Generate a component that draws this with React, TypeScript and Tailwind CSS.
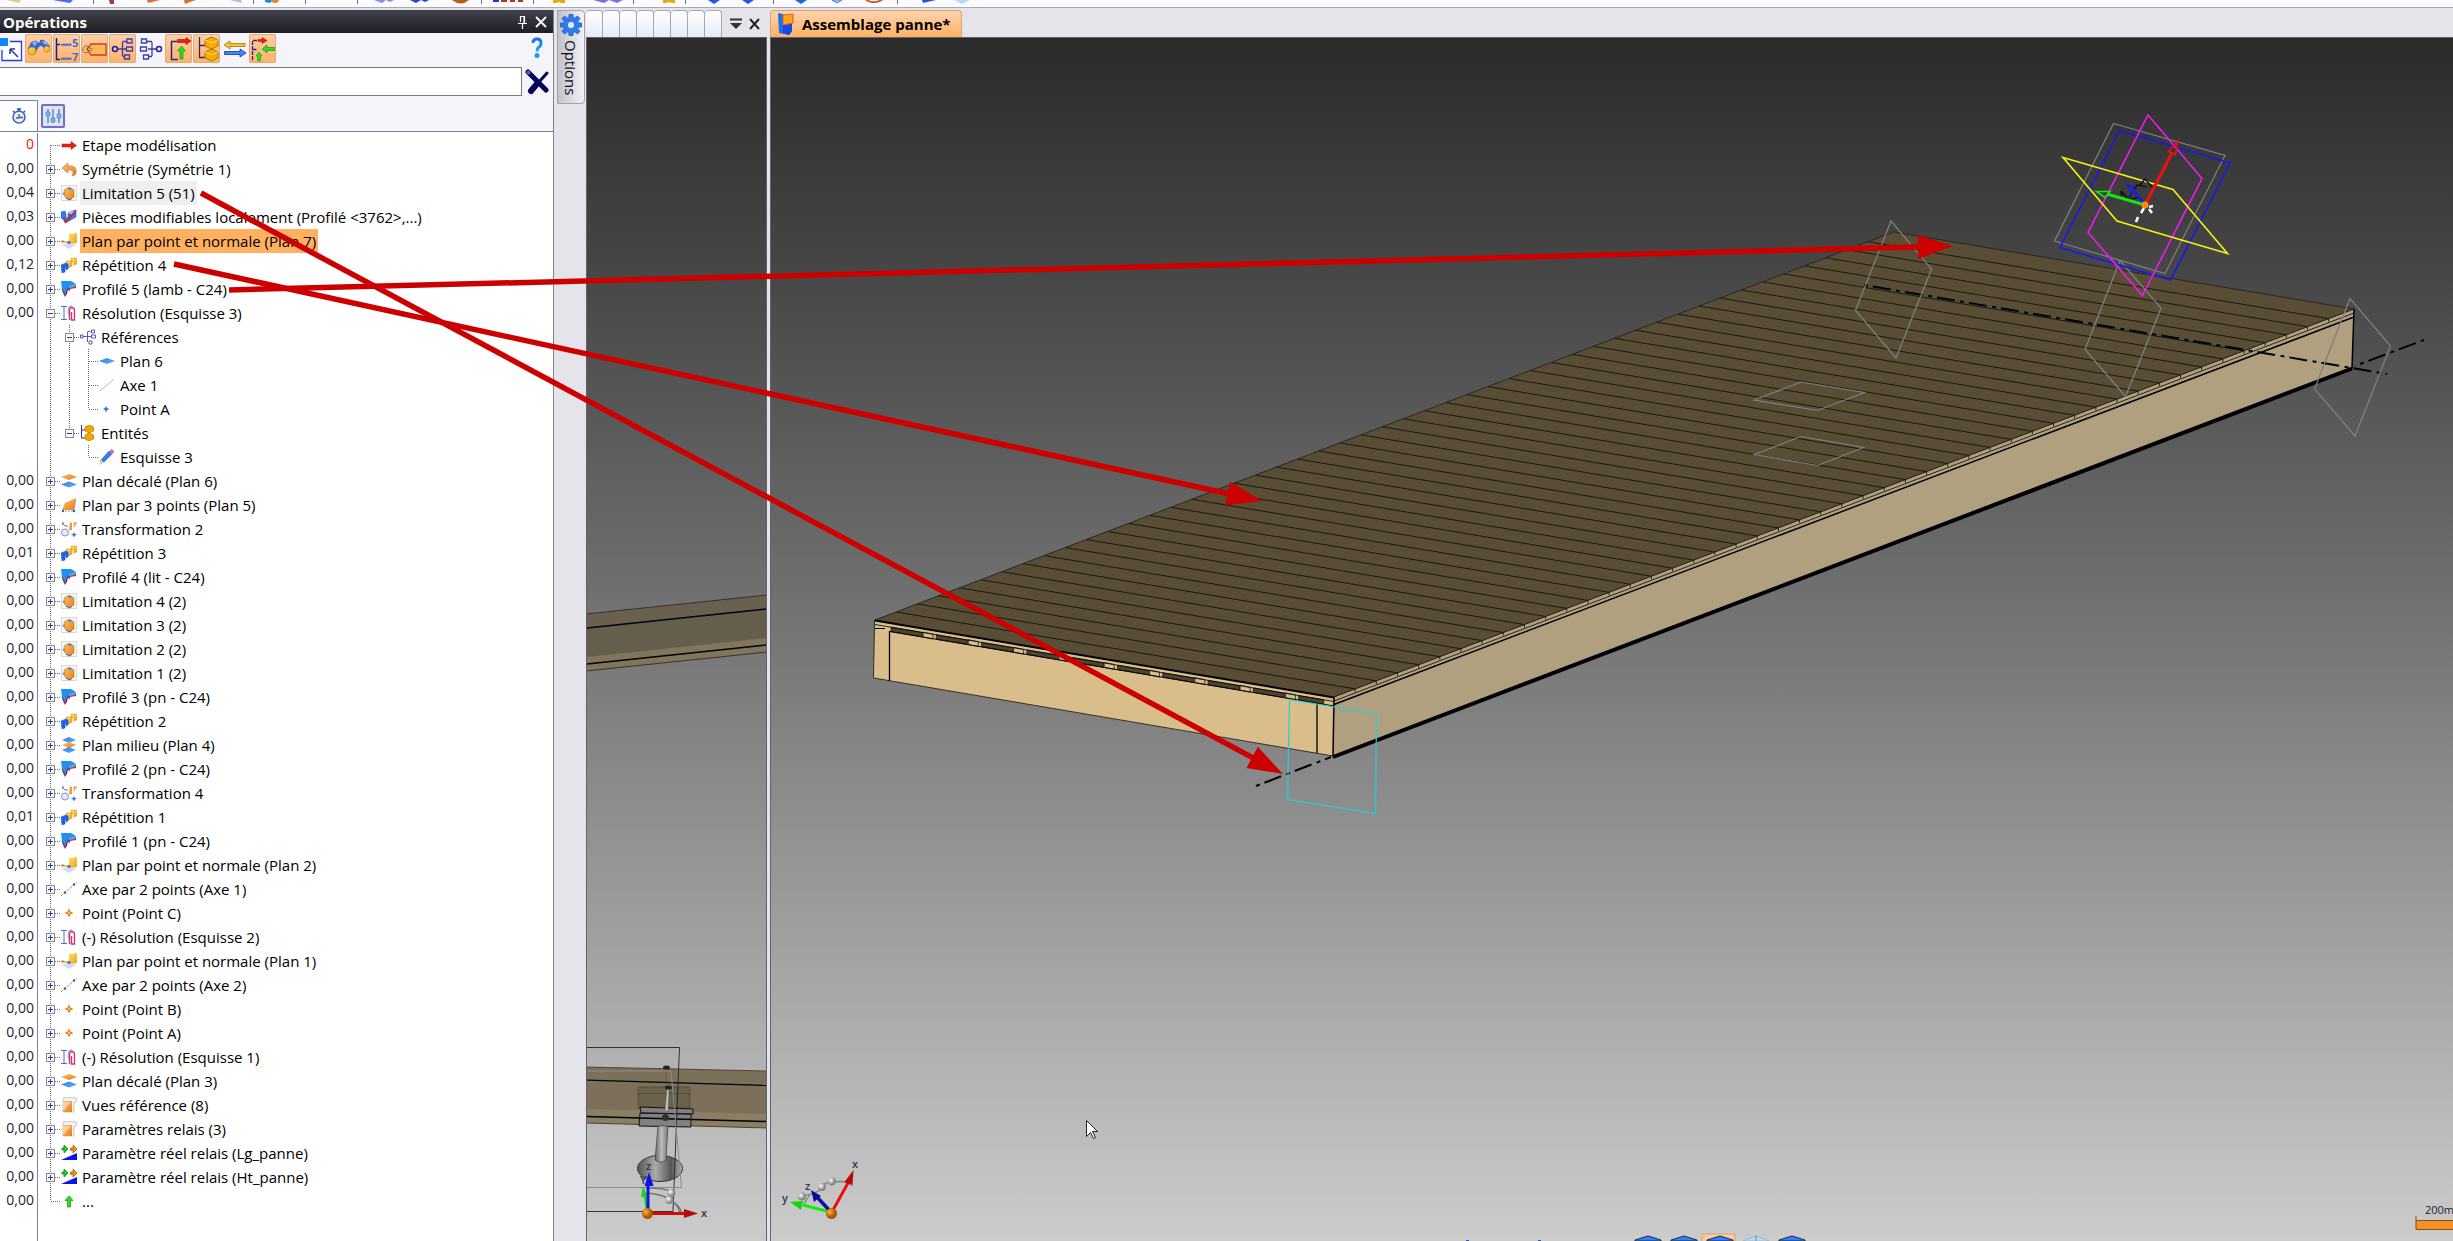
import React from "react";

type IconName =
  | "step" | "symmetry" | "limit" | "pieces" | "normal" | "repeat" | "profile" | "resolve"
  | "refs" | "plane" | "axis" | "dot" | "entities" | "pencil" | "offset" | "three"
  | "transform" | "middle" | "axis2" | "point" | "folder" | "param" | "up";

type Row = {
  t?: string;
  icon: IconName;
  label: string;
  level?: 0 | 1 | 2;
  box?: "+" | "-";
  guides?: boolean[];
  edge?: "first" | "last";
  tone?: "gray" | "orange";
};

const rows: Row[] = [
  { t: "0", icon: "step", label: "Etape modélisation", edge: "first" },
  { t: "0,00", icon: "symmetry", label: "Symétrie (Symétrie 1)", box: "+" },
  { t: "0,04", icon: "limit", label: "Limitation 5 (51)", box: "+", tone: "gray" },
  { t: "0,03", icon: "pieces", label: "Pièces modifiables localement (Profilé <3762>,...)", box: "+" },
  { t: "0,00", icon: "normal", label: "Plan par point et normale (Plan 7)", box: "+", tone: "orange" },
  { t: "0,12", icon: "repeat", label: "Répétition 4", box: "+" },
  { t: "0,00", icon: "profile", label: "Profilé 5 (lamb - C24)", box: "+" },
  { t: "0,00", icon: "resolve", label: "Résolution (Esquisse 3)", box: "-" },
  { icon: "refs", label: "Références", level: 1, box: "-", guides: [true] },
  { icon: "plane", label: "Plan 6", level: 2, guides: [true, true] },
  { icon: "axis", label: "Axe 1", level: 2, guides: [true, true] },
  { icon: "dot", label: "Point A", level: 2, guides: [true, true], edge: "last" },
  { icon: "entities", label: "Entités", level: 1, box: "-", guides: [true], edge: "last" },
  { icon: "pencil", label: "Esquisse 3", level: 2, guides: [true, false], edge: "last" },
  { t: "0,00", icon: "offset", label: "Plan décalé (Plan 6)", box: "+" },
  { t: "0,00", icon: "three", label: "Plan par 3 points (Plan 5)", box: "+" },
  { t: "0,00", icon: "transform", label: "Transformation 2", box: "+" },
  { t: "0,01", icon: "repeat", label: "Répétition 3", box: "+" },
  { t: "0,00", icon: "profile", label: "Profilé 4 (lit - C24)", box: "+" },
  { t: "0,00", icon: "limit", label: "Limitation 4 (2)", box: "+" },
  { t: "0,00", icon: "limit", label: "Limitation 3 (2)", box: "+" },
  { t: "0,00", icon: "limit", label: "Limitation 2 (2)", box: "+" },
  { t: "0,00", icon: "limit", label: "Limitation 1 (2)", box: "+" },
  { t: "0,00", icon: "profile", label: "Profilé 3 (pn - C24)", box: "+" },
  { t: "0,00", icon: "repeat", label: "Répétition 2", box: "+" },
  { t: "0,00", icon: "middle", label: "Plan milieu (Plan 4)", box: "+" },
  { t: "0,00", icon: "profile", label: "Profilé 2 (pn - C24)", box: "+" },
  { t: "0,00", icon: "transform", label: "Transformation 4", box: "+" },
  { t: "0,01", icon: "repeat", label: "Répétition 1", box: "+" },
  { t: "0,00", icon: "profile", label: "Profilé 1 (pn - C24)", box: "+" },
  { t: "0,00", icon: "normal", label: "Plan par point et normale (Plan 2)", box: "+" },
  { t: "0,00", icon: "axis2", label: "Axe par 2 points (Axe 1)", box: "+" },
  { t: "0,00", icon: "point", label: "Point (Point C)", box: "+" },
  { t: "0,00", icon: "resolve", label: "(-) Résolution (Esquisse 2)", box: "+" },
  { t: "0,00", icon: "normal", label: "Plan par point et normale (Plan 1)", box: "+" },
  { t: "0,00", icon: "axis2", label: "Axe par 2 points (Axe 2)", box: "+" },
  { t: "0,00", icon: "point", label: "Point (Point B)", box: "+" },
  { t: "0,00", icon: "point", label: "Point (Point A)", box: "+" },
  { t: "0,00", icon: "resolve", label: "(-) Résolution (Esquisse 1)", box: "+" },
  { t: "0,00", icon: "offset", label: "Plan décalé (Plan 3)", box: "+" },
  { t: "0,00", icon: "folder", label: "Vues référence (8)", box: "+" },
  { t: "0,00", icon: "folder", label: "Paramètres relais (3)", box: "+" },
  { t: "0,00", icon: "param", label: "Paramètre réel relais (Lg_panne)", box: "+" },
  { t: "0,00", icon: "param", label: "Paramètre réel relais (Ht_panne)", box: "+" },
  { t: "0,00", icon: "up", label: "...", edge: "last" },
];

const glyphs: Record<IconName, React.ReactNode> = {
  step: <path d="M1 7h9V4.500l5.500 4-5.500 4V10H1z" fill="#e8200c" stroke="#a81808" strokeWidth=".5" />,
  symmetry: (
    <>
      <path d="M1 7l6-5v3c6-1 9 2 8 8-1 1-3 2-4 2 2-4 1-6-4-6v3z" fill="url(#gOr)" stroke="#b8661c" strokeWidth=".5" />
      <path d="M2 8l5 3v1z" fill="#7d98c8" />
    </>
  ),
  limit: (
    <>
      <rect x=".5" y=".5" width="15" height="15" fill="#f7f7f7" stroke="#d9d9d9" />
      <path d="M1 9l3-3 3 7z" fill="#46b8e8" />
      <path d="M3 5l5-3 5 3v7l-5 3-4-3z" fill="url(#gOr)" stroke="#b86a10" strokeWidth=".5" />
      <path d="M6 4l3-1.500 3 1.500-3 .8z" fill="#3b86d8" />
      <path d="M5 13l3 2 3-1.500" stroke="#4a6a90" fill="none" />
    </>
  ),
  pieces: (
    <>
      <path d="M0 3l4-1 1 3v4l2-1V4l4-2 4-1v7l-7 4-4 2-2-4-2-1z" fill="#2d7ef0" stroke="#1746b8" strokeWidth=".5" />
      <path d="M7 3l5-2 1 3-5 2z" fill="#9cc0ff" />
      <path d="M3 9l2 4 5-6M8 5l2 2 5-5" stroke="#e01818" strokeWidth="1.600" fill="none" />
    </>
  ),
  normal: (
    <>
      <path d="M1 12l7-3 7 3-7 4z" fill="#d3dff0" />
      <path d="M8 1l8-1v10l-8 1z" fill="url(#gYe)" />
      <path d="M1 8.500l8 1" stroke="#e0701c" strokeWidth="1.200" />
      <circle cx="1.500" cy="8.500" r="1.200" fill="#e0701c" />
      <circle cx="8" cy="9.500" r="1.400" fill="#2a64d8" />
    </>
  ),
  repeat: (
    <>
      <path d="M10 1h6v6l-3 1V5l-3-1z" fill="url(#gYe)" stroke="#d09010" strokeWidth=".5" />
      <path d="M5 4h6v5l-4 2V8L5 7z" fill="url(#gYe)" stroke="#c08010" strokeWidth=".5" />
      <path d="M0 8l5-2 2 1v5l-2 1v-3l-1 1v4l-3 1z" fill="#1c62f0" stroke="#1a4cc8" strokeWidth=".5" />
    </>
  ),
  profile: (
    <>
      <path d="M1 1l14 3v3l-6 1v2l-2-1-1 4-2 3-3-6z" fill="#8c3a5c" />
      <path d="M0 0h10l5 3-8 2-3 8-3-5z" fill="#1d92f0" />
      <path d="M7 5l8-2-1 3-6 1z" fill="#5fa3e0" />
    </>
  ),
  resolve: (
    <>
      <path d="M0 1.500h6M0 14.500h6M3 1v14" stroke="#3b78c8" fill="none" />
      <path d="M7.500 10V5q0-4 3.500-4" stroke="#9ab8dc" strokeWidth="1.500" fill="none" />
      <path d="M8.500 15V6Q8.500 2.500 11 2.500T13.500 6v9h-3V7" stroke="#e0286e" strokeWidth="1.300" fill="none" />
    </>
  ),
  refs: (
    <path d="M3 7.500h5M7.500 3v10M7.500 2.500h3M0.500 6h2.500v3H.500zM11.500 1h3v3h-3zM11.500 6h4v3h-4zM8 7.500h3M9 12h3v3H9z" stroke="#5558b8" fill="none" />
  ),
  plane: <path d="M0 8l8-3 8 3-8 3z" fill="url(#gBl)" />,
  axis: <path d="M1 14L15 2" stroke="#a8bcd8" />,
  dot: <path d="M7 5l1 2 2.500 1L8 9l-1 2.500L6 9 4 8l2-1z" fill="#2f74e0" />,
  entities: (
    <>
      <path d="M1.500 0v13H5M1.500 5H5" stroke="#2828a8" fill="none" />
      <path d="M5 2l4-2 4.500 2v4L9 8 5 6zM5 10l4-2 4.500 2v4L9 16l-4-2z" fill="#f5a800" stroke="#b87800" strokeWidth=".7" />
    </>
  ),
  pencil: (
    <>
      <path d="M2 11l8-9 3 3-8 8-4 2z" fill="#2f7df0" stroke="#1b57c0" strokeWidth=".5" />
      <path d="M10 2.500L12.500 0 15.500 2.500 13 5.500z" fill="#d8689c" />
      <path d="M2 11l3 2.500L0 16z" fill="#f0d8a0" />
    </>
  ),
  offset: (
    <>
      <path d="M0 4l8-3 8 3-8 3z" fill="url(#gOr)" />
      <path d="M0 11.500l8-3 8 3-8 3z" fill="url(#gBl)" />
    </>
  ),
  three: (
    <>
      <path d="M1 13L4 6l11-5-2 12z" fill="url(#gOr)" />
      <path d="M1 14h12l2-12" stroke="#7c98d8" strokeDasharray="2 1" fill="none" />
      <circle cx="2" cy="14" r="1.200" fill="#2a5cd0" /><circle cx="13" cy="14" r="1.200" fill="#2a5cd0" />
    </>
  ),
  transform: (
    <>
      <path d="M1 2l3 3h3M2 1v3" stroke="#4878d0" fill="none" />
      <circle cx="4" cy="11.500" r="3.500" fill="#e4eaf8" stroke="#8090d0" />
      <path d="M8 9l1-8 2 1v7z" fill="#f59a30" />
      <path d="M13 6l1-4h-2M15 1v3" stroke="#e8883c" fill="none" />
      <path d="M13 11l1 2 2 .5-2 1-1 2-1-2-2-1 2-.5z" fill="#3f78d8" />
    </>
  ),
  middle: (
    <>
      <path d="M1 3l7-3 7 3-7 3z" fill="url(#gBl)" />
      <path d="M1 8l7-3 7 3-7 3z" fill="url(#gOr)" />
      <path d="M1 13l7-3 7 3-7 3z" fill="url(#gBl)" />
    </>
  ),
  axis2: (
    <>
      <path d="M0 15L16 1" stroke="#e8883c" strokeDasharray="3 1" />
      <circle cx="4" cy="11.500" r="1.200" fill="#2a5cd0" /><circle cx="13" cy="3.500" r="1.200" fill="#2a5cd0" />
    </>
  ),
  point: <path d="M8 4.500l1 2.500L11.500 8 9 9l-1 2.500L7 9 4.500 8 7 7z" fill="#ffc040" stroke="#e07818" />,
  folder: (
    <>
      <path d="M2 1q6-1 13.500 0L15 5h-2v10H2z" fill="#f4f4f4" stroke="#b4b4b4" strokeWidth=".7" />
      <path d="M2 4h9v11H2z" fill="url(#gOr)" />
      <path d="M2 14l8-9H2z" fill="#f8d8b8" opacity=".8" />
    </>
  ),
  param: (
    <>
      <path d="M1 3h2V0l4 4-4 4V5H1z" fill="#1fd01f" stroke="#0a7a0a" strokeWidth=".7" />
      <path d="M9.500 3h2.500V0l4 4-4 4V5.500H9.500z" fill="#f08c14" stroke="#9c5200" strokeWidth=".7" />
      <path d="M0 15L16 8v7z" fill="#0814e8" />
    </>
  ),
  up: <path d="M8 3l4 4.500H9.500V14h-3V7.500H4z" fill="#26e020" stroke="#0e9a0c" strokeWidth=".7" />,
};

function Glyph({ name }: { name: IconName }) {
  return (
    <svg viewBox="0 0 16 16" className="size-4 shrink-0" aria-hidden="true">
      {glyphs[name]}
    </svg>
  );
}

function Branch({ row }: { row: Row }) {
  const y1 = row.edge === "first" ? 12 : 0;
  const y2 = row.edge === "last" ? 12 : 24;
  return (
    <span className="relative flex h-6 w-[23px] shrink-0">
      <svg viewBox="0 0 23 24" className="h-6 w-[23px]" aria-hidden="true">
        <path d={`M12.500 ${y1}V${y2}M13 12.500H23`} stroke="#6e6e6e" strokeDasharray="1 1" fill="none" />
      </svg>
      {row.box && (
        <button type="button" aria-label={`${row.box === "+" ? "Développer" : "Réduire"} ${row.label}`} className="absolute top-2 left-2 flex size-[9px] items-center justify-center border border-[#8a8a8a] bg-[#f6f6f6]">
          <svg viewBox="0 0 7 7" className="size-[7px] shrink-0" aria-hidden="true">
            <path d={row.box === "+" ? "M1 3.500H6M3.500 1V6" : "M1 3.500H6"} stroke="#2c3c98" fill="none" />
          </svg>
        </button>
      )}
    </span>
  );
}

function TreeRow({ row }: { row: Row }) {
  const tone = row.tone === "orange" ? "bg-[#ffb060]" : row.tone === "gray" ? "bg-[#efefef]" : "";
  return (
    <li className="flex h-6 items-center">
      <span className={`h-6 w-[38px] shrink-0 border-r border-[#82828c] pr-[3px] text-right text-sm leading-[22px] ${row.t === "0" ? "text-[#ff1010]" : "text-[#1c1c30]"}`}>
        {row.t}
      </span>
      {row.guides?.map((on, i) => (
        <svg key={i} viewBox="0 0 19 24" className="h-6 w-[19px] shrink-0" aria-hidden="true">
          {on && <path d="M12.500 0V24" stroke="#6e6e6e" strokeDasharray="1 1" />}
        </svg>
      ))}
      <Branch row={row} />
      <Glyph name={row.icon} />
      <span className={`ml-[3px] h-6 px-[2px] text-[15px] leading-6 whitespace-nowrap text-black ${tone}`}>{row.label}</span>
    </li>
  );
}

const tools: { label: string; on: boolean; art: React.ReactNode }[] = [
  {
    label: "Rechercher", on: true,
    art: (
      <>
        <path d="M3 15l4-7 4-1 3 3 2-4 4 1 5 6-3 3-6-5-3 2-3 6z" fill="#2c6ae8" stroke="#1740a8" strokeWidth=".7" />
        <path d="M7 8l4-1 1 3-3 2zM17 7l4 0 2 4-4-1z" fill="#86b4ff" />
        <circle cx="7" cy="17" r="4" fill="url(#gYe)" stroke="#b07808" strokeWidth=".7" />
        <circle cx="22" cy="15" r="3" fill="url(#gYe)" stroke="#b07808" strokeWidth=".7" />
      </>
    ),
  },
  {
    label: "Numéroter", on: true,
    art: (
      <>
        <path d="M3.500 4V25.500H7M3.500 10.500H7" stroke="#20208c" strokeWidth="1.500" fill="none" />
        <path d="M8 10l1.500 1.500L11 10l1.500 1.500L14 10l1.500 1.500L17 10l1.500 1.500M8 24l1.500 1.500L11 24l1.500 1.500L14 24l1.500 1.500L17 24l1.500 1.500" stroke="#3c6ed0" strokeWidth="1.500" fill="none" />
        <text x="19" y="13" fontSize="11" fontWeight="700" fill="#3c6ed0" fontFamily="Open Sans, sans-serif">5</text>
        <text x="19" y="27" fontSize="11" fontWeight="700" fill="#3c6ed0" fontFamily="Open Sans, sans-serif">7</text>
      </>
    ),
  },
  {
    label: "Étiquettes", on: true,
    art: (
      <>
        <path d="M6 15l4-5h15v11H10z" fill="#ffb85c" stroke="#c0402c" strokeWidth="1.300" />
        <circle cx="10" cy="15.500" r="1.300" fill="#fff" stroke="#a04020" strokeWidth=".8" />
        <path d="M10 15Q6 10 3 13t1 6q4 0 5-3" stroke="#a06a30" fill="none" />
      </>
    ),
  },
  {
    label: "Références", on: true,
    art: (
      <>
        <circle cx="6" cy="15" r="2.500" stroke="#2020a0" strokeWidth="1.500" fill="none" />
        <path d="M9 15h8M13.500 8v14M13.500 7.500h4M13.500 22.500h2M18 5h5v4h-5zM17.500 13h6v4h-6zM15.500 21h5v4h-5z" stroke="#3c3ca8" strokeWidth="1.300" fill="none" />
      </>
    ),
  },
  {
    label: "Dépendances", on: false,
    art: (
      <>
        <circle cx="22" cy="15" r="2.500" stroke="#2020a0" strokeWidth="1.500" fill="none" />
        <path d="M19 15h-8M15 8v14M15 7.500h-5M15 22.500h-4M4.500 5h5v4h-5zM3.500 13h6v4h-6zM6.500 21h5v4h-5z" stroke="#3c3ca8" strokeWidth="1.300" fill="none" />
      </>
    ),
  },
  {
    label: "Remonter l'étape", on: true,
    art: (
      <>
        <path d="M12 7.500H6.500V25.500H13" stroke="#28288c" strokeWidth="1.500" fill="none" />
        <path d="M12.500 5.500h8.500V3.500l5 3.500-5 3.500V8.500h-8.500z" fill="#f01c10" stroke="#980c04" strokeWidth=".6" />
        <path d="M16.500 12l4 5h-2.500v8h-3v-8h-2.500z" fill="#28e020" stroke="#0c880c" strokeWidth=".6" />
      </>
    ),
  },
  {
    label: "Entités", on: true,
    art: (
      <>
        <path d="M6.500 3V23.500H12M6.500 11.500H12" stroke="#28288c" strokeWidth="1.300" fill="none" />
        <path d="M12 6l6.500-3L25 6v6l-6.500 3L12 12zM12 18l6.500-3 6.500 3v6l-6.500 3-6.500-3z" fill="#f8ac00" stroke="#b07400" />
        <path d="M12 6l6.500 3L25 6M12 18l6.500 3 6.500-3" stroke="#ffe080" fill="none" />
      </>
    ),
  },
  {
    label: "Permuter", on: false,
    art: (
      <>
        <path d="M3 11l6-4v2.500h15v3H9V15z" fill="#f8c030" stroke="#a87408" strokeWidth=".8" />
        <path d="M25 19l-6-4v2.500H3.500v3H19V23z" fill="#3c88ff" stroke="#1030b0" strokeWidth=".8" />
      </>
    ),
  },
  {
    label: "Étapes", on: true,
    art: (
      <>
        <path d="M8 6.500H3.500V26.500M3.500 15.500H8" stroke="#28288c" strokeWidth="1.300" strokeDasharray="4 1" fill="none" />
        <path d="M9 5.500h4V3.500l5 3-5 3V7.500H9z" fill="#f01c10" stroke="#980c04" strokeWidth=".5" />
        <path d="M13 15l5-4v2.500h8v3h-8V19z" fill="#28e020" stroke="#0c880c" strokeWidth=".6" />
        <path d="M10 18l3 4h-1.500v5h-3v-5H7z" fill="#28e020" stroke="#0c880c" strokeWidth=".5" />
      </>
    ),
  },
];

const panelSeps = [93, 253, 305, 357, 481, 533, 633, 685, 773, 897];

function Ribbon() {
  return (
    <header className="h-2 overflow-hidden border-b border-[#a9a9b3] bg-[#fbfaff]">
      <svg width="1000" height="7" viewBox="0 0 1000 7" aria-hidden="true">
        {panelSeps.map((x) => <path key={x} d={`M${x + 0.5} 0V4`} stroke="#6c6c78" />)}
        <path d="M7 0l12 3 2-3z" fill="#d8d080" /><path d="M53 0h20l-3 3-12-2z" fill="#4a6cf0" />
        <path d="M109 0h5v4h-4z" fill="#a03860" /><path d="M147 0h13l-8 2-4 1z" fill="#d87028" />
        <path d="M184 0h12l-6 2-5 2z" fill="#d87028" /><path d="M230 0h11l1 3z" fill="#a8c0e8" />
        <path d="M265 0h8l-3 3-5-1z" fill="#1c88e0" /><circle cx="275" cy="-1" r="4" fill="#e88820" />
        <path d="M374 0h20l-4 2-4-2-4 3z" fill="#7c8ef0" /><path d="M410 0h19l-4 2-4-2-5 3z" fill="#1848e0" />
        <path d="M452 0h17q-8 7-17 0z" fill="#b86010" />
        <path d="M493 0h6v2h-6z" fill="#2030e0" /><path d="M501 0h6v2h-6zM510 0h5v2h-5zM518 0h5v2h-5z" fill="#a83c10" />
        <path d="M553 0h12v3h-3l-3-1-3 1h-3z" fill="#e8a810" /><path d="M593 0h30l-6 3-8-3-5 3z" fill="#7870e0" />
        <path d="M663 0h12v3h-3l-3-1-3 1h-3z" fill="#e8a810" />
        <path d="M708 0h12l-6 4zM742 0h12l-6 4z" fill="#2454f0" /><path d="M795 0h12l-6 4z" fill="#1868e0" />
        <path d="M832 0h10l-5 3z" fill="#b4d4ff" stroke="#4a78d8" /><path d="M866 0q9 5 17-1" stroke="#c85818" strokeWidth="2" fill="none" />
        <path d="M922 0h14l-13 3z" fill="#2850e8" /><path d="M954 0h16l-8 4z" fill="#b4dcff" />
      </svg>
    </header>
  );
}

function OperationsPanel() {
  return (
    <section className="flex w-[554px] shrink-0 flex-col border-r border-[#82828c] bg-[#f5f4fa]" aria-label="Opérations">
      <div className="flex h-[23px] items-center gap-[7px] bg-linear-to-b from-[#41424c] to-[#1f1f27] pr-[6px] pl-[3px] text-white">
        <h2 className="flex-1 text-[15px] leading-5 font-bold">Opérations</h2>
        <button type="button" aria-label="Épingler">
          <svg viewBox="0 0 11 14" className="h-[14px] w-[11px]" aria-hidden="true"><path d="M3.500 7V1.500h4V8M7 1v7M1 8.500h9M5.500 9v5" stroke="#fff" strokeWidth="1.200" fill="none" /></svg>
        </button>
        <button type="button" aria-label="Fermer">
          <svg viewBox="0 0 12 12" className="size-3" aria-hidden="true"><path d="M1 1l10 10M11 1L1 11" stroke="#fff" strokeWidth="1.800" /></svg>
        </button>
      </div>
      <div className="flex h-[34px] items-start gap-px pt-px">
        <button type="button" aria-label="Cadre" className="h-[29px] w-6">
          <svg viewBox="0 0 24 29" className="h-[29px] w-6" aria-hidden="true">
            <path d="M10 7.500h11.500V26.500H2V16" stroke="#2a3ae0" strokeWidth="1.300" fill="#fff" />
            <path d="M0 4h8v8H0z" fill="#1484f0" />
            <path d="M18 23l-8-8M10 15h5M10 15v5" stroke="#2038b0" strokeWidth="1.500" fill="none" />
          </svg>
        </button>
        {tools.map((t) => (
          <button key={t.label} type="button" aria-label={t.label} aria-pressed={t.on} className={`h-[29px] w-[27px] rounded-xs ${t.on ? "bg-linear-to-b from-[#ffcfa6] to-[#ffb266] outline -outline-offset-1 outline-[#dcab80]" : ""}`}>
            <svg viewBox="0 0 27 29" className="h-[29px] w-[27px]" aria-hidden="true">{t.art}</svg>
          </button>
        ))}
        <button type="button" aria-label="Aide" className="mt-[3px] mr-[10px] ml-auto">
          <svg viewBox="0 0 12 22" className="h-[22px] w-3" aria-hidden="true">
            <path d="M2 6q0-4 4-4t4 4q0 3-2 4-2 1.500-2 4.500" stroke="url(#gHelp)" strokeWidth="3" fill="none" />
            <circle cx="6" cy="18.500" r="2.500" fill="#189cf0" />
          </svg>
        </button>
      </div>
      <div className="flex h-[33px] items-start">
        <input type="text" aria-label="Rechercher une opération" className="h-[29px] min-w-0 flex-1 border border-l-0 border-[#7a7a7a] bg-white px-1 text-[15px] outline-none" />
        <button type="button" aria-label="Effacer la recherche" className="mt-[2px] mr-1 ml-[3px]">
          <svg viewBox="0 0 24 26" className="h-[26px] w-6" aria-hidden="true">
            <path d="M3 3l18 18" stroke="#04045c" strokeWidth="5" strokeLinecap="round" />
            <path d="M22 4L6 22" stroke="#04045c" strokeWidth="3" strokeLinecap="round" />
            <path d="M6 22l5-6" stroke="#04045c" strokeWidth="6" strokeLinecap="round" />
            <circle cx="3.500" cy="3.500" r="2" fill="#5c64a8" />
          </svg>
        </button>
      </div>
      <div className="flex h-8 border-b border-[#82828c]">
        <div className="flex w-[38px] items-center justify-center border-t border-r border-[#82828c] bg-white">
          <svg viewBox="0 0 16 16" className="size-4" aria-label="Temps de calcul">
            <circle cx="8" cy="9" r="6" fill="#e4edf8" stroke="#3c5cc8" strokeWidth="1.500" />
            <path d="M6 1h4M8 1v2M2 3l1.500 1.500M14 3l-1.500 1.500" stroke="#3050c0" strokeWidth="1.500" />
            <path d="M8 9V6M8 9.500h4M5 10h3" stroke="#505860" strokeWidth="1.300" />
          </svg>
        </div>
        <button type="button" aria-label="Filtres" className="mt-1 ml-[3px] flex size-6 items-center justify-center rounded-xs border-2 border-[#6d6fd0] bg-[#dfe4ee]">
          <svg viewBox="0 0 18 18" className="size-[18px] shrink-0" aria-hidden="true">
            <path d="M4 2v14M9 2v14M15 2v14" stroke="#3c4cb0" />
            <path d="M2 5h4v4H2zM7 11h4v4H7zM13 7h4v4h-4z" fill="#6cb8f4" stroke="#3c78c8" strokeWidth=".5" />
          </svg>
        </button>
      </div>
      <div className="flex flex-1 flex-col bg-white">
        <ul className="pt-px">
          {rows.map((r, i) => <TreeRow key={i} row={r} />)}
        </ul>
        <div className="w-[38px] flex-1 border-r border-[#82828c]" />
      </div>
    </section>
  );
}

function Triad({ ox, oy, children }: { ox: number; oy: number; children: React.ReactNode }) {
  return (
    <g>
      {children}
      <circle cx={ox} cy={oy} r="5.500" fill="url(#gBall)" />
    </g>
  );
}

function SideView() {
  return (
    <svg viewBox="587 38 179 1203" preserveAspectRatio="xMinYMin slice" className="absolute inset-0 size-full" aria-label="Vue de côté">
      <path d="M586 614L767 595V652L586 671z" fill="#6a604f" />
      <path d="M586 628L767 609V638L586 657z" fill="#665e4d" />
      <path d="M586 657L767 638V652L586 671z" fill="#81755c" />
      <path d="M586 614L767 595M586 671L767 652" stroke="#26241f" strokeWidth=".8" />
      <path d="M586 628L767 609M586 664L767 645" stroke="#000" strokeWidth="1.500" />

      <path d="M586 1067L767 1071V1128L586 1123z" fill="#7c705b" />
      <path d="M586 1109L767 1114V1128L586 1123z" fill="#8b7f63" />
      <path d="M586 1067L767 1071M586 1123L767 1128" stroke="#3a362e" strokeWidth=".8" />
      <path d="M638 1087h52v21h-52z" fill="#6b624d" stroke="#4b4434" strokeWidth=".7" />
      <path d="M638 1093.500h52" stroke="#4b4434" strokeWidth=".7" />
      <path d="M586 1080L767 1085.500" stroke="#000" strokeWidth="1.300" />
      <path d="M640 1107l53 2v5l-52-1zM640 1113l51 1v13l-52-1z" fill="#818181" stroke="#111" strokeWidth="1" />
      <path d="M586 1116.500L767 1121.500" stroke="#000" strokeWidth="1.500" />
      <path d="M667 1089l2 0-1 22h-3z" fill="#c8c8c8" stroke="#555" strokeWidth=".5" />
      <path d="M666 1070v18" stroke="#555" strokeWidth=".7" />
      <ellipse cx="666.500" cy="1067.500" rx="3.500" ry="2" fill="#222" />
      <ellipse cx="668.500" cy="1087.500" rx="3.500" ry="2" fill="#222" />
      <circle cx="665.500" cy="1117.500" r="3.500" fill="#333" />
      <ellipse cx="660" cy="1168.500" rx="22.500" ry="13" fill="url(#gDisc)" stroke="#333" />
      <path d="M658 1126h10l-2 34q-5 4-11 0z" fill="url(#gTube)" stroke="#333" strokeWidth=".6" />
      <path d="M586 1047.500H679.500L673 1211.500H586" stroke="#222" strokeWidth=".9" fill="none" />
      <path d="M586 1071H671L681.500 1187.500H586" stroke="#8a8a8a" fill="none" />

      <path d="M646 1188q22 0 26 5M646 1193q30 2 34 20M670 1200q9 4 12 13" stroke="#777" fill="none" strokeWidth="1.300" />
      <circle cx="671.500" cy="1193" r="4" fill="url(#gPearl)" />
      <circle cx="669.500" cy="1200" r="4" fill="url(#gPearl)" />
      <Triad ox={647.5} oy={1213.500}>
        <path d="M647 1210l-2-14" stroke="#00e000" strokeWidth="2.500" />
        <path d="M643 1186l4 10-6 1z" fill="#10d810" />
        <path d="M650 1213.500h35" stroke="#d80808" strokeWidth="3" />
        <path d="M684 1209l14 4.500-14 4.500z" fill="#b80808" />
        <path d="M648 1210v-26" stroke="#1010f0" strokeWidth="3" />
        <path d="M649 1172l4.500 14h-9z" fill="#1010f0" />
      </Triad>
      <g fontFamily="Open Sans, sans-serif" fontSize="11" fontWeight="600" fill="#30384c">
        <text x="646" y="1170">z</text><text x="701" y="1217">x</text><text x="640" y="1184">Y</text>
      </g>
    </svg>
  );
}

const lerp = (a: number, b: number, t: number) => a + (b - a) * t;

function DeckView() {
  const planks = Array.from({ length: 47 }, (_, i) => (i + 1) / 48.2);
  const slats = Array.from({ length: 10 }, (_, i) => 891 + i * 45.3);
  const edgeY = (x: number) => 620 + ((x - 875) / 459) * 77;
  return (
    <svg viewBox="771 38 1682 1203" preserveAspectRatio="xMinYMin slice" className="absolute inset-0 size-full" aria-label="Assemblage panne">
      <path d="M1334 697L2354 309L2352 368L1333 756z" fill="#b0a080" />
      <path d="M875 620L1334 697L1333 756L873.500 678z" fill="#d9be8c" />
      <path d="M875 620L1893.500 232L2354 309L1334 697z" fill="#594d36" />
      <g stroke="#15120c" strokeWidth=".9">
        {planks.map((t) => (
          <path key={t} d={`M${lerp(875, 1893.5, t)} ${lerp(620, 232, t)}L${lerp(1334, 2354, t)} ${lerp(697, 309, t)}v3`} fill="none" />
        ))}
      </g>
      <path d="M875 620L1893.500 232L2354 309" stroke="#222" strokeWidth=".9" fill="none" />
      <path d="M1334 697L2354 309M1334 701L2354 313" stroke="#1a1710" strokeWidth=".9" />
      <path d="M1334 704.500L2354 317" stroke="#000" strokeWidth="1.500" />
      {slats.map((x, i) => {
        const w = i === 9 ? 25 : 32;
        return (
          <g key={x} stroke="#111" strokeWidth=".7">
            <path d={`M${x} ${edgeY(x) + 4.500}L${x + w} ${edgeY(x + w) + 4.500}v4.500L${x} ${edgeY(x) + 9}z`} fill="#4c4331" />
            {i < 9 && <path d={`M${x + w} ${edgeY(x + w) + 4}l10 2v5l-10 -2z`} fill="#d9be8c" />}
          </g>
        );
      })}
      <path d="M875 620.500L1334 697.500" stroke="#000" strokeWidth="2" />
      <path d="M875 624.500L1334 701.500" stroke="#000" strokeWidth=".8" />
      <path d="M890 631.500L1334 706M875 628.500h10" stroke="#000" strokeWidth="1" fill="none" />
      <path d="M874.500 620L873.500 678L1333 756" stroke="#2a2418" strokeWidth=".9" fill="none" />
      <path d="M889.500 631V681M1317 703V753" stroke="#000" strokeWidth="1.300" />
      <path d="M1334 697L1333 756M2354 309L2352 368" stroke="#000" strokeWidth="1.500" />
      <path d="M1333 757L2352 368.500" stroke="#000" strokeWidth="4" />

      <g stroke="#000" strokeWidth="2" strokeDasharray="4 5 18 5.500" fill="none">
        <path d="M1864 285L2387 374" /><path d="M2360 364L2424 340" /><path d="M1256 786L1331 757" />
      </g>

      <g stroke="#808083" strokeWidth="1.200" fill="none">
        <path d="M1891 221L1931.500 269L1896 358L1855.500 310.500z" />
        <path d="M2120 260.500L2161 308L2125.500 396.500L2085 349.500z" />
        <path d="M2350 298.500L2390.500 346L2355 436L2314.500 389z" />
        <path d="M1801 382L1864.500 392.500L1817.500 410.500L1754 400z" />
        <path d="M1801 436.500L1863.500 447.500L1817.500 465.500L1754.500 454.500z" />
        <path d="M2113.500 123.500L2225 155.500L2165 273.500L2054.500 241z" />
      </g>
      <path d="M1289.500 699.500L1376.500 714L1375.500 813.500L1287.500 799.500z" stroke="#20d0d8" strokeWidth="1.200" fill="none" />
      <g fill="none" strokeWidth="1.600">
        <path d="M2119.500 130.500L2230 163L2170.500 280L2060 247.500z" stroke="#1818f0" />
        <path d="M2148 115L2202 178.500L2142.500 295.500L2088 232.500z" stroke="#f018f0" />
        <path d="M2063 157.500L2173 189.500L2227.500 253.500L2117 221z" stroke="#f4f010" />
        <path d="M2128 200l9-15 10 2M2145 179l8 9M2145 179l-5 6M2121 191l8 9 10-3M2121 191l1 8" stroke="#080808" strokeWidth="1.200" />
        <path d="M2145 205L2133 190" stroke="#1818f0" strokeWidth="2.500" />
        <path d="M2127.500 185l7 2-3 7z" stroke="#1818f0" />
        <path d="M2145 205L2107 194" stroke="#10e810" strokeWidth="3" />
        <path d="M2096.500 191.500l13.500 0-5 6z" stroke="#10e810" />
        <path d="M2145 205L2172 153" stroke="#f01010" strokeWidth="3" />
        <path d="M2177.500 141.500l-9 10 7 3z" stroke="#f01010" />
        <path d="M2144 208l-3 5M2138 217l-2 5M2149 207l4-1M2149 209l3 4" stroke="#fff" strokeWidth="2.500" />
      </g>
      <circle cx="2145" cy="205" r="3.500" fill="#ff8a10" />

      <path d="M1086.500 1120.500v16l4-4 3 6 2-1-3-6h5z" fill="#fff" stroke="#222" />

      <path d="M802 1196q20-4 20-9 4-6 12-5 14-2 18 4M804 1204l6-10" stroke="#808080" strokeWidth="1.300" fill="none" />
      <circle cx="832" cy="1181.500" r="4" fill="url(#gPearl)" />
      <circle cx="822" cy="1187" r="4" fill="url(#gPearl)" />
      <circle cx="802" cy="1196.500" r="4" fill="url(#gPearl)" />
      <Triad ox={831.5} oy={1213.500}>
        <path d="M830 1212L803 1205" stroke="#10f010" strokeWidth="3" />
        <path d="M790 1202l13-1-2 9z" fill="#10d810" />
        <path d="M830 1211L816 1196" stroke="#1010a8" strokeWidth="3.500" />
        <path d="M811 1190l10 6-7 6z" fill="#0c0c90" />
        <path d="M833 1210L848 1183" stroke="#e81010" strokeWidth="3" />
        <path d="M853.500 1170l-1 15-8-3z" fill="#b80808" />
      </Triad>
      <g fontFamily="Open Sans, sans-serif" fontSize="11" fontWeight="600" fill="#30384c">
        <text x="852" y="1168">x</text><text x="782" y="1202">y</text><text x="805" y="1190">z</text>
      </g>

      <path d="M1702 1234h33v8h-33z" fill="#ffcba4" stroke="#d8a070" />
      {[1648, 1684, 1720, 1792].map((x) => (
        <path key={x} d={`M${x - 13} 1241v-1l13-4 13 4v1z`} fill="#2c84f4" stroke="#1c2c50" />
      ))}
      <path d="M1743 1241l13-5 13 5z" fill="#bcd8ee" stroke="#8aa8c0" strokeWidth=".6" />
      <path d="M1756 1235v6" stroke="#6c90b0" />
      <path d="M1466 1240h3v1h-3zM1538 1240h3v1h-3z" fill="#2858d0" />
      <path d="M2416 1221h37v8h-37z" fill="#f58e24" />
      <path d="M2453 1220.500h-37v9h37M2416 1216v5" stroke="#80561c" fill="none" />
      <text x="2425" y="1214" fontSize="11" fontFamily="Open Sans, sans-serif" fill="#20242c">200m</text>
    </svg>
  );
}

const pointers = [
  { x1: 201, y1: 193, x2: 1283, y2: 774 },
  { x1: 174, y1: 264, x2: 1262, y2: 501 },
  { x1: 229, y1: 290, x2: 1953, y2: 246 },
];

function Pointers() {
  return (
    <svg viewBox="0 0 2453 1241" preserveAspectRatio="xMinYMin slice" className="pointer-events-none absolute inset-0 size-full" aria-hidden="true">
      {pointers.map((p) => {
        const d = Math.hypot(p.x2 - p.x1, p.y2 - p.y1);
        const ux = (p.x2 - p.x1) / d;
        const uy = (p.y2 - p.y1) / d;
        const bx = p.x2 - ux * 35;
        const by = p.y2 - uy * 35;
        return (
          <g key={p.y1}>
            <path d={`M${p.x1} ${p.y1}L${bx + ux * 2} ${by + uy * 2}`} stroke="#cd0000" strokeWidth="5.500" />
            <path d={`M${p.x2} ${p.y2}L${bx - uy * 12} ${by + ux * 12}L${bx + uy * 12} ${by - ux * 12}z`} fill="#cd0000" />
          </g>
        );
      })}
    </svg>
  );
}

function Defs() {
  return (
    <svg className="absolute size-0" aria-hidden="true">
      <defs>
        <linearGradient id="gOr" x1="0" y1="0" x2="1" y2="1"><stop offset="0" stopColor="#ffc070" /><stop offset="1" stopColor="#e87c14" /></linearGradient>
        <linearGradient id="gYe" x1="0" y1="0" x2="1" y2="1"><stop offset="0" stopColor="#ffe070" /><stop offset="1" stopColor="#f0a010" /></linearGradient>
        <linearGradient id="gBl" x1="0" y1="0" x2="1" y2="1"><stop offset="0" stopColor="#2c78e8" /><stop offset="1" stopColor="#6cb0ff" /></linearGradient>
        <linearGradient id="gHelp" x1="0" y1="0" x2="0" y2="1"><stop offset="0" stopColor="#1474e0" /><stop offset="1" stopColor="#20a8f8" /></linearGradient>
        <linearGradient id="gTube"><stop offset="0" stopColor="#666" /><stop offset=".5" stopColor="#bbb" /><stop offset="1" stopColor="#777" /></linearGradient>
        <linearGradient id="gDisc"><stop offset="0" stopColor="#555" /><stop offset=".4" stopColor="#aaa" /><stop offset=".75" stopColor="#555" /><stop offset="1" stopColor="#bbb" /></linearGradient>
        <radialGradient id="gBall" cx=".35" cy=".35"><stop offset="0" stopColor="#ffb040" /><stop offset="1" stopColor="#a85400" /></radialGradient>
        <radialGradient id="gPearl" cx=".35" cy=".35"><stop offset="0" stopColor="#fff" /><stop offset="1" stopColor="#888" /></radialGradient>
      </defs>
    </svg>
  );
}

export default function App() {
  return (
    <div className="relative flex min-h-screen flex-col overflow-hidden bg-[#e4e4ea] font-['Open_Sans','Noto_Sans',sans-serif]">
      <Defs />
      <Ribbon />
      <main className="flex flex-1 pt-[2px]">
        <OperationsPanel />
        <aside className="w-8 shrink-0 pl-[3px]">
          <button type="button" className="flex h-[94px] w-7 flex-col items-center gap-1 rounded-r border border-[#a4a4ac] bg-linear-to-r from-[#c2c3ca] to-[#f2f2f6] pt-[3px]">
            <svg viewBox="0 0 24 24" className="size-[22px] shrink-0" aria-hidden="true">
              <g fill="#2c7cf0" stroke="#1048b8" strokeWidth=".6">
                {[0, 45, 90, 135, 180, 225, 270, 315].map((a) => (
                  <path key={a} d="M10 0h4l1 6H9z" transform={`rotate(${a} 12 12)`} />
                ))}
              </g>
              <circle cx="12" cy="12" r="6" fill="#dfe8f8" stroke="#2c7cf0" strokeWidth="4" />
              <circle cx="12" cy="12" r="4" fill="none" stroke="#1048b8" strokeWidth=".7" />
            </svg>
            <span className="text-[15px] leading-5 text-[#101018] [writing-mode:vertical-rl]">Options</span>
          </button>
        </aside>
        <section className="flex w-[181px] shrink-0 flex-col" aria-label="Documents">
          <div className="flex h-[27px] items-center" role="tablist">
            {Array.from({ length: 8 }, (_, i) => (
              <button key={i} type="button" role="tab" aria-label={`Document ${i + 1}`} className="h-[27px] w-[17px] shrink-0 rounded-t border border-b-0 border-l-0 border-[#a4a6b4] bg-linear-to-b from-white to-[#e6ebf6]" />
            ))}
            <button type="button" aria-label="Liste des documents" className="ml-2">
              <svg viewBox="0 0 12 12" className="size-3" aria-hidden="true"><path d="M0 1.500h12" stroke="#333" strokeWidth="2" /><path d="M0 5h12l-6 6z" fill="#333" /></svg>
            </button>
            <button type="button" aria-label="Fermer le document" className="ml-[7px]">
              <svg viewBox="0 0 11 12" className="h-3 w-[11px]" aria-hidden="true"><path d="M1 1l9 10M10 1L1 11" stroke="#222" strokeWidth="2" /></svg>
            </button>
          </div>
          <div className="relative flex-1 overflow-hidden border border-b-0 border-[#62626e] bg-linear-to-b from-[#2b2b2b] to-[#cccccc]">
            <SideView />
          </div>
        </section>
        <section className="ml-[3px] flex min-w-0 flex-1 flex-col" aria-label="Assemblage">
          <div className="flex h-[27px]" role="tablist">
            <button type="button" role="tab" aria-selected="true" className="flex h-[27px] w-48 items-center gap-[7px] rounded-t border border-b-0 border-[#d8a274] bg-linear-to-b from-[#ffd3ae] to-[#ffb163] text-[15px] leading-5 font-bold whitespace-nowrap text-black">
              <svg viewBox="0 0 18 24" className="ml-[6px] h-6 w-[18px] shrink-0" aria-hidden="true">
                <path d="M1 1l5 1v15l9 2-3 4-10-2z" fill="#1870f0" />
                <path d="M6 12l9-2v9l-3 4-6-2z" fill="#1448e8" />
                <path d="M6 3l10-1v9l-10 2z" fill="#ffa818" stroke="#e05838" />
              </svg>
              Assemblage panne*
            </button>
          </div>
          <div className="relative flex-1 overflow-hidden border border-r-0 border-b-0 border-[#62626e] bg-linear-to-b from-[#2b2b2b] to-[#cccccc]">
            <DeckView />
          </div>
        </section>
      </main>
      <Pointers />
    </div>
  );
}
